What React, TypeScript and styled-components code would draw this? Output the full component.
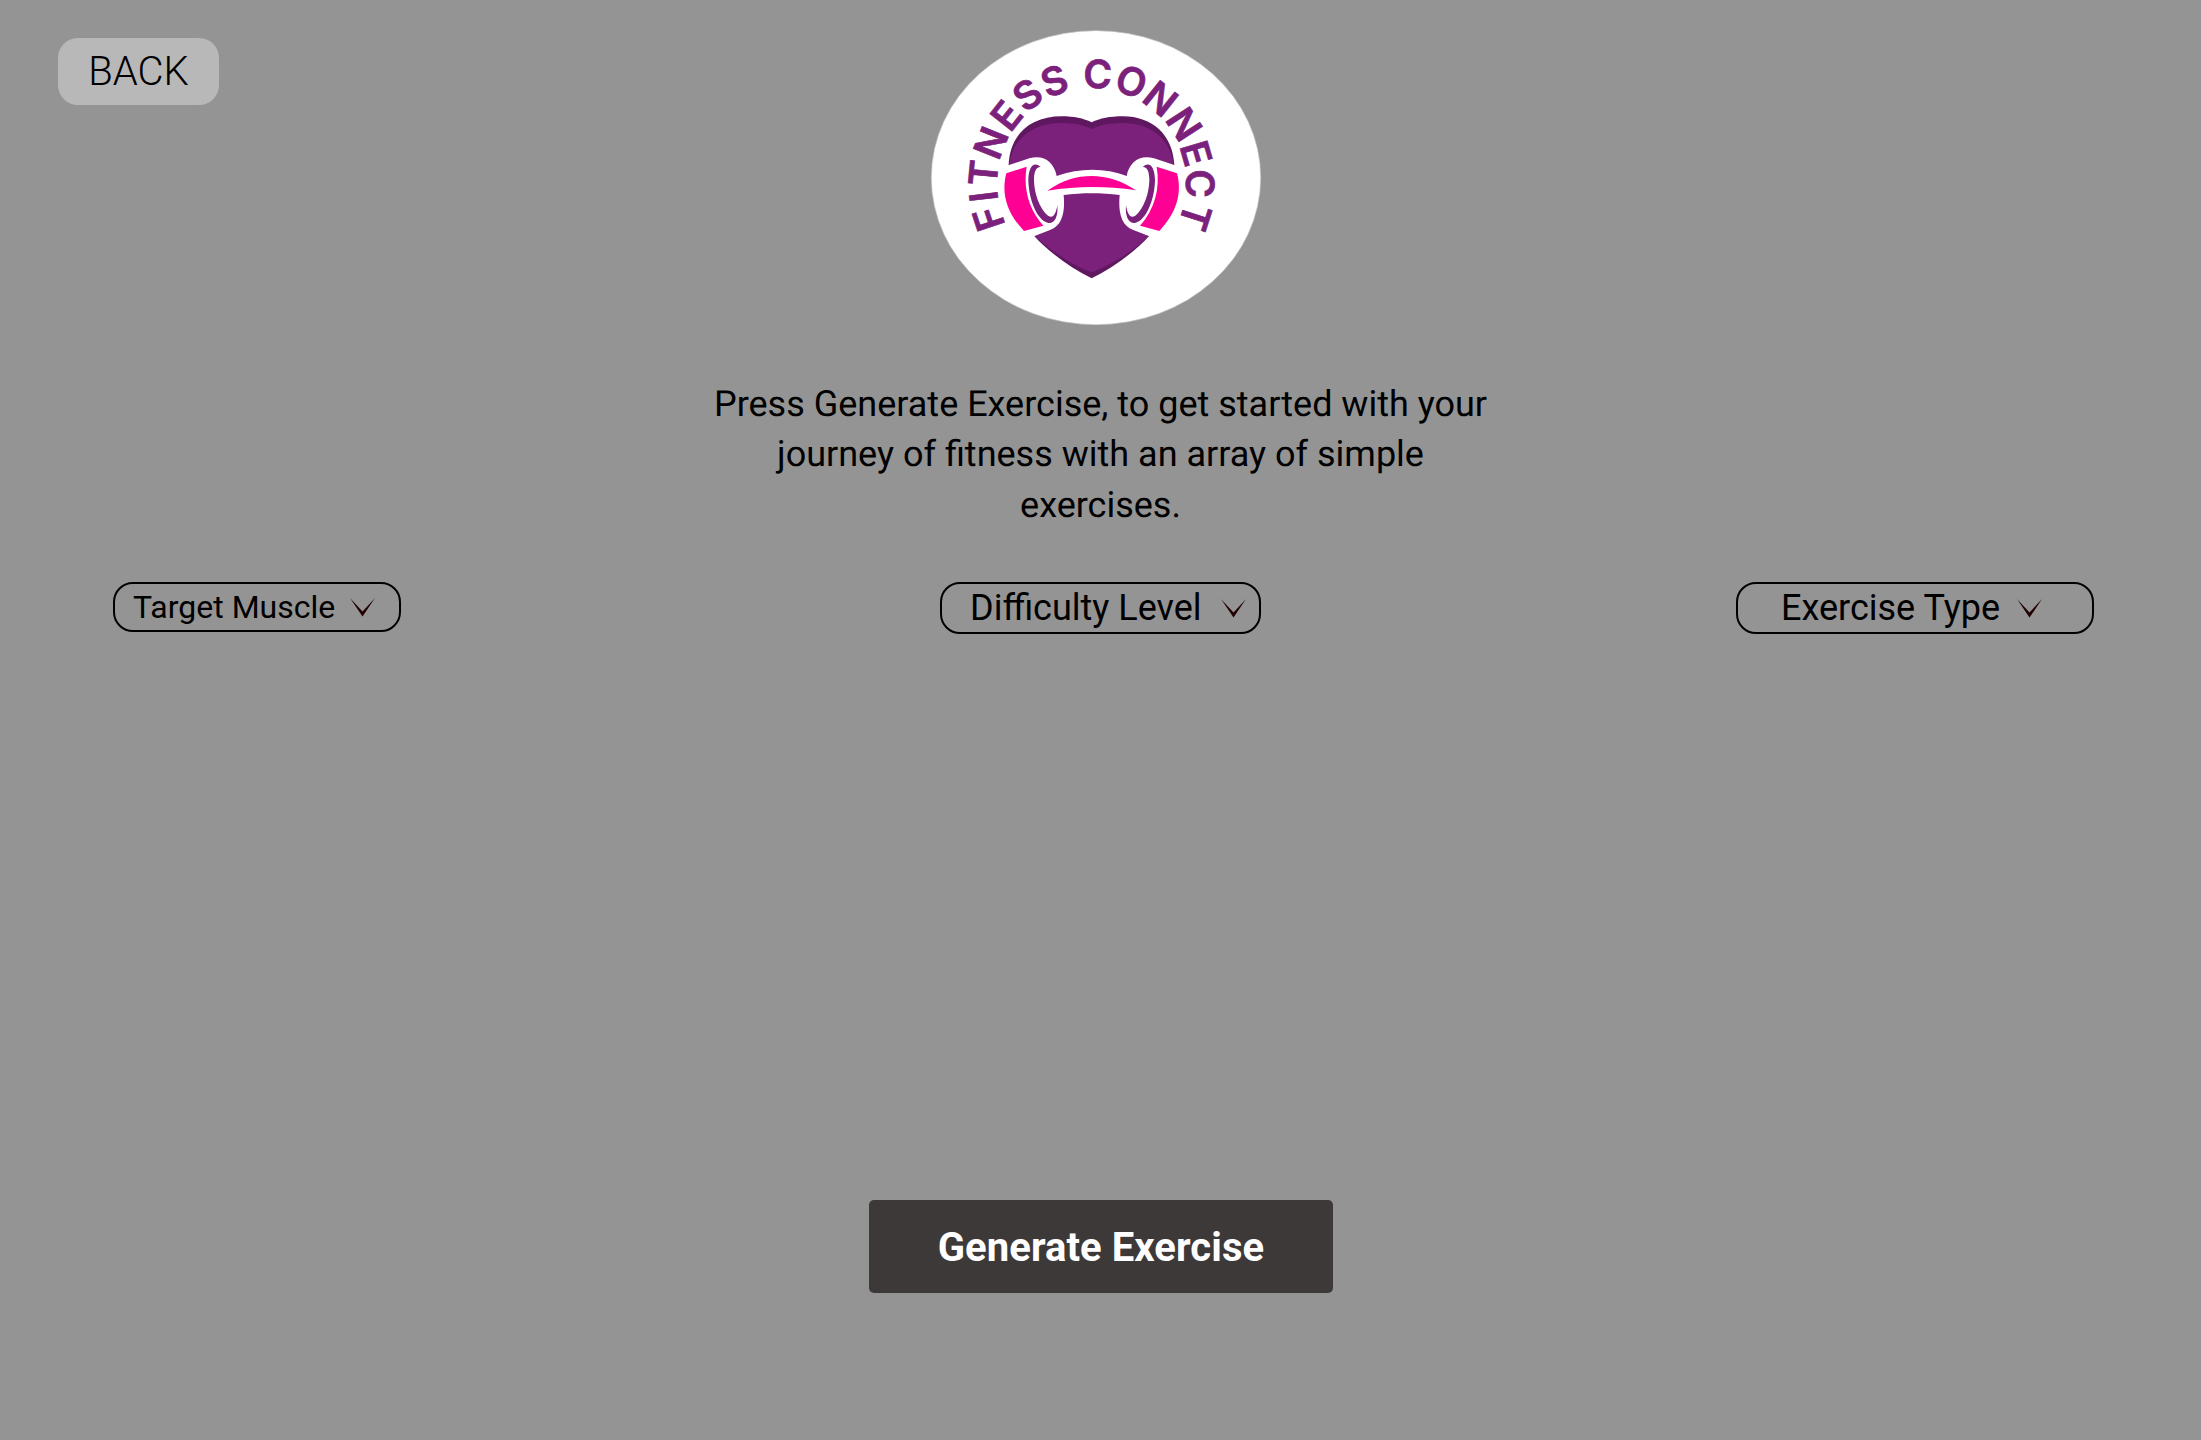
import React from "react";
import styled, { createGlobalStyle } from "styled-components";

const GlobalStyle = createGlobalStyle`
  * { box-sizing: border-box; }
  body { margin: 0; background: #949494; }
  button { font: inherit; margin: 0; padding: 0; border: 0; cursor: pointer; }
`;

const Page = styled.main`
  width: 2201px;
  height: 1440px;
  display: flex;
  flex-direction: column;
  overflow: hidden;
  background: #949494;
  color: #000;
  font-family: Roboto, "Liberation Sans", sans-serif;
  text-rendering: geometricPrecision;
`;

const Header = styled.header`
  display: flex;
  align-items: flex-start;
  gap: 701px;
  height: 379px;
  padding: 20px 0 0 58px;
`;

const BackButton = styled.button`
  width: 161px;
  height: 67px;
  margin-top: 18px;
  border-radius: 20px;
  background: #b8b8b8;
  color: #000;
  font-size: 40px;
  font-weight: 300;
  line-height: 67px;
`;

const LogoSvg = styled.svg`
  width: 350px;
  height: 315px;
  flex: none;
`;

const LogoLetter = styled.text`
  font-family: Inter, "Liberation Sans", sans-serif;
  font-size: 117px;
  font-weight: 600;
  fill: #7b217b;
  stroke: #7b217b;
  stroke-width: 2px;
  text-anchor: middle;
`;

const Intro = styled.p`
  width: 800px;
  height: 203px;
  margin: 0 auto;
  font-size: 36px;
  line-height: 50.4px;
  text-align: center;
`;

const Filters = styled.section`
  display: flex;
  align-items: flex-start;
  padding-left: 113px;
  height: 618px;
`;

const Select = styled.button<{ $w: number; $h: number; $size: number; $left: number; $gap: number; $after?: number }>`
  display: flex;
  align-items: center;
  gap: ${(p) => p.$gap}px;
  width: ${(p) => p.$w}px;
  height: ${(p) => p.$h}px;
  margin-right: ${(p) => p.$after ?? 0}px;
  padding-left: ${(p) => p.$left}px;
  border: 2px solid #000;
  border-radius: 20px;
  background: transparent;
  color: #000;
  font-size: ${(p) => p.$size}px;
  line-height: ${(p) => p.$h - 4}px;
  white-space: nowrap;
`;

const ChevronSvg = styled.svg`
  width: 25px;
  height: 19px;
  flex: none;
  margin-top: 1px;
`;

const GenerateButton = styled.button`
  width: 464px;
  height: 93px;
  margin: 0 auto;
  padding: 2px 0 0 1px;
  border-radius: 5px;
  background: #3e3939;
  color: #fff;
  font-size: 40px;
  font-weight: 700;
  letter-spacing: 0.07px;
  line-height: 91px;
`;

/* Each letter of the ring: character, angle from the top, baseline radius. */
const letters: [string, number, number][] = [
  ["F", -108.5, 287], ["I", -96.8, 287], ["T", -84.5, 287], ["N", -68.1, 287], ["E", -51.6, 287],
  ["S", -36.3, 289], ["S", -20.5, 287], ["C", 2.6, 287], ["O", 20.8, 286], ["N", 38.7, 284],
  ["N", 56.9, 285], ["E", 73.6, 281], ["C", 90, 279], ["T", 108, 281],
];

function DumbbellEnd() {
  return (
    <>
      <path fill="#ff0095" d="M259 460 L320 440 C309 505 326 568 370 617 L312 633 C260 578 243 520 259 460Z" />
      <path
        fill="#7b217b"
        d="M362 441 C342 423 326 438 325 480 C326 540 352 602 385 609 C404 611 415 590 412 556 C407 587 398 595 384 587 C358 565 343 520 342 482 C342 455 348 440 362 441Z"
      />
    </>
  );
}

function Logo() {
  return (
    <LogoSvg viewBox="0 0 1050 945" role="img" aria-label="Fitness Connect">
      <ellipse cx="528" cy="473" rx="494" ry="441" fill="#fff" stroke="#c9c9c9" strokeWidth="2" />
      {letters.map(([ch, angle, radius], i) => (
        <LogoLetter key={i} transform={`translate(518 491) rotate(${angle}) translate(0 ${-radius})`}>
          {ch}
        </LogoLetter>
      ))}
      <path
        fill="#5f1860"
        d="M266 434 C270 340 335 289 425 289 C462 289 490 295 515 307 C540 295 570 289 608 289 C698 289 758 345 763 434 L763 560 L688 647 C640 700 575 745 515 775 C455 745 390 700 342 647 L266 560Z"
      />
      <path
        fill="#7b217b"
        d="M268 434 C278 350 345 309 425 309 C462 309 490 315 515 327 C540 315 570 309 608 309 C685 309 750 350 761 434 L763 560 L688 645 C645 690 575 735 515 757 C455 735 387 690 342 645 L266 560Z"
      />
      <path
        fill="#fff"
        d="M258 438 L328 415 C370 403 402 425 410 468 C480 443 555 443 620 468 C628 425 660 403 702 415 L772 438 L790 560 L692 650 L640 630 C600 615 595 570 599 525 C545 518 485 518 431 525 C435 570 430 615 390 630 L338 650 L240 560Z"
      />
      <DumbbellEnd />
      <g transform="translate(1030 0) scale(-1 1)">
        <DumbbellEnd />
      </g>
      <path fill="#ff0095" d="M382 512 C430 480 470 468 515 468 C560 468 605 482 648 511 C560 498 470 498 382 512Z" />
    </LogoSvg>
  );
}

function Chevron() {
  return (
    <ChevronSvg viewBox="0 0 25 19" aria-hidden="true">
      <path d="M0 0 L12.5 13.5 L25 0 L12.5 18.6Z" fill="#210000" />
    </ChevronSvg>
  );
}

export default function App() {
  return (
    <Page>
      <GlobalStyle />
      <Header>
        <BackButton>BACK</BackButton>
        <Logo />
      </Header>
      <Intro>
        Press Generate Exercise, to get started with your journey of fitness with an array of simple exercises.
      </Intro>
      <Filters>
        <Select $w={288} $h={50} $size={32} $left={18} $gap={15} $after={539}>
          Target Muscle
          <Chevron />
        </Select>
        <Select $w={321} $h={52} $size={36} $left={28} $gap={19} $after={475}>
          Difficulty Level
          <Chevron />
        </Select>
        <Select $w={358} $h={52} $size={36} $left={43} $gap={17}>
          Exercise Type
          <Chevron />
        </Select>
      </Filters>
      <GenerateButton>Generate Exercise</GenerateButton>
    </Page>
  );
}
